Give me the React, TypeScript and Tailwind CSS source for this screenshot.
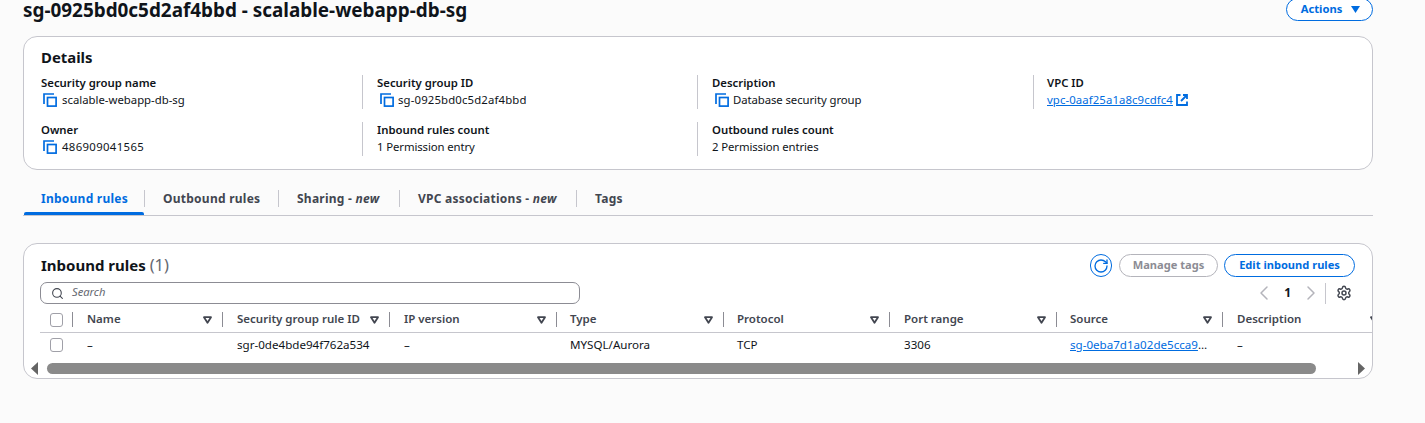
import { Search, RotateCw, ChevronLeft, ChevronRight, Settings } from 'lucide-react'

const FONT = "font-['Noto_Sans',sans-serif]"

const COLUMNS = [
  { name: 'Name', width: 'w-[150px]', pad: 'pl-[14px]', value: '–' },
  { name: 'Security group rule ID', width: 'w-[167px]', pad: 'pl-[14px]', value: 'sgr-0de4bde94f762a534' },
  { name: 'IP version', width: 'w-[167px]', pad: 'pl-[14px]', value: '–' },
  { name: 'Type', width: 'w-[167px]', pad: 'pl-[13px]', value: 'MYSQL/Aurora' },
  { name: 'Protocol', width: 'w-[166px]', pad: 'pl-[13px]', value: 'TCP' },
  { name: 'Port range', width: 'w-[167px]', pad: 'pl-[14px]', value: '3306' },
  { name: 'Source', width: 'w-[166px]', pad: 'pl-[13px]', value: 'sg-0eba7d1a02de5cca9', link: true },
  { name: 'Description', width: 'w-[167px]', pad: 'pl-[14px]', value: '–' },
]

const TABS = [
  { label: 'Inbound rules', active: true, width: 'w-[121px]' },
  { label: 'Outbound rules', width: 'w-[134px]' },
  { label: 'Sharing', isNew: true, width: 'w-[121px]' },
  { label: 'VPC associations', isNew: true, width: 'w-[177px]' },
  { label: 'Tags', width: 'w-[80px]' },
]

function CopyIcon() {
  return (
    <svg width="14" height="14" viewBox="0 0 14 14" fill="none" className="shrink-0">
      <path d="M1 11V1H11" stroke="#006ce0" strokeWidth="1.7" />
      <rect x="4.5" y="4.5" width="8.6" height="8.6" stroke="#006ce0" strokeWidth="1.7" />
    </svg>
  )
}

function ExternalIcon() {
  return (
    <svg width="12" height="12" viewBox="0 0 12 12" fill="none" className="ml-[3px] shrink-0">
      <path d="M4.5 1H1V11H11V7.5" stroke="#006ce0" strokeWidth="1.8" />
      <path d="M7 1H11V5M11 1L5 7" stroke="#006ce0" strokeWidth="1.8" />
    </svg>
  )
}

function SortArrow() {
  return (
    <svg width="9" height="8" viewBox="0 0 9 8" className="shrink-0">
      <path d="M1 1.2H8L4.5 6.8Z" fill="none" stroke="#424650" strokeWidth="1.8" strokeLinejoin="round" />
    </svg>
  )
}

function DetailCell(props: {
  label: string
  value: string
  width?: string
  pad?: string
  tracking?: string
  copy?: boolean
  link?: boolean
  first?: boolean
}) {
  return (
    <div className={props.first ? 'w-[321px] pb-[1px]' : `${props.width} border-l border-[#c6c6cd] ${props.pad ?? 'pl-[14px]'} pb-[1px]`}>
      <div className="h-[16px] text-[11.35px] leading-[16px] font-semibold whitespace-nowrap text-[#0f141a]">{props.label}</div>
      <div className={`flex h-[17px] items-center text-[11.35px] leading-[17px] whitespace-nowrap text-[#0f141a] ${props.tracking ?? ''}`}>
        {props.copy && (
          <span className={props.first ? 'mr-[5px] ml-[2px] flex' : 'mr-[4px] ml-[3px] flex'}>
            <CopyIcon />
          </span>
        )}
        {props.link ? (
          <>
            <span className="text-[#006ce0] underline">{props.value}</span>
            <ExternalIcon />
          </>
        ) : (
          props.value
        )}
      </div>
    </div>
  )
}

export default function App() {
  return (
    <div className={`${FONT} h-[423px] w-[1425px] overflow-hidden bg-[#fbfbfb] pr-[52px] pl-[23px] text-[#0f141a]`}>
      {/* Header */}
      <div className="flex h-[36px] items-start justify-between">
        <h1 className="text-[18.9px] leading-[20px] font-bold whitespace-nowrap">
          sg-0925bd0c5d2af4bbd - scalable-webapp-db-sg
        </h1>
        <button className="mt-[-2px] flex h-[23px] w-[87px] items-center justify-center gap-[9px] rounded-full border border-[#006ce0] bg-white pl-[2px] text-[11.2px] font-bold text-[#006ce0]">
          Actions
          <svg width="9" height="7" viewBox="0 0 9 7">
            <path d="M0 0H9L4.5 7Z" fill="#006ce0" />
          </svg>
        </button>
      </div>

      {/* Details */}
      <div className="h-[134px] rounded-[14px] border border-[#c6c6cd] bg-white pt-[8px] pl-[17px]">
        <h2 className="text-[14.9px] leading-[25px] font-bold">Details</h2>
        <div className="mt-[5px] flex">
          <DetailCell first label="Security group name" value="scalable-webapp-db-sg" copy />
          <DetailCell width="w-[335px]" tracking="tracking-[0.15px]" label="Security group ID" value="sg-0925bd0c5d2af4bbd" copy />
          <DetailCell width="w-[336px]" tracking="tracking-[-0.08px]" label="Description" value="Database security group" copy />
          <DetailCell width="w-[300px]" pad="pl-[13px]" tracking="tracking-[0.1px]" label="VPC ID" value="vpc-0aaf25a1a8c9cdfc4" link />
        </div>
        <div className="mt-[13px] flex">
          <DetailCell first tracking="tracking-[0.35px]" label="Owner" value="486909041565" copy />
          <DetailCell width="w-[335px]" tracking="tracking-[-0.1px]" label="Inbound rules count" value="1 Permission entry" />
          <DetailCell width="w-[336px]" tracking="tracking-[-0.1px]" label="Outbound rules count" value="2 Permission entries" />
        </div>
      </div>

      {/* Tabs */}
      <div className="mt-[15px] flex h-[31px] border-b border-[#c6c6cd]">
        {TABS.map((tab, i) => (
          <div key={tab.label} className={`relative flex h-[27px] ${tab.width} items-center`}>
            <div
              className={`flex h-[17px] w-full items-center pl-[18px] text-[12px] font-bold tracking-[0.25px] whitespace-nowrap ${
                i > 0 ? 'border-l border-[#c6c6cd]' : ''
              } ${tab.active ? 'text-[#006ce0]' : 'text-[#424650]'}`}
            >
              {tab.label}
              {tab.isNew && (
                <span className="whitespace-pre">
                  {' - '}
                  <em>new</em>
                </span>
              )}
            </div>
            {tab.active && <div className="absolute top-[27px] right-0 left-[1px] h-[3px] rounded-t-[2px] bg-[#006ce0]" />}
          </div>
        ))}
      </div>

      {/* Inbound rules */}
      <div className="mt-[27px] h-[136px] overflow-hidden rounded-[14px] border border-[#c6c6cd] bg-white">
        <div className="flex h-[38px] justify-between pr-[17px] pl-[17px]">
          <div className="pt-[8px] text-[15px] leading-[25px] font-bold">
            Inbound rules <span className="text-[16.5px] font-normal text-[#656871]">(1)</span>
          </div>
          <div className="flex items-start pt-[10px]">
            <button className="flex h-[23px] w-[22px] items-center justify-center rounded-full border border-[#006ce0]">
              <RotateCw size={16} strokeWidth={2} color="#006ce0" />
            </button>
            <button className="ml-[7px] h-[23px] w-[99px] rounded-full border border-[#b4b4bb] text-[11.1px] font-bold text-[#8c8c94]">
              Manage tags
            </button>
            <button className="ml-[6px] h-[23px] w-[131px] rounded-full border border-[#006ce0] text-[11.1px] font-bold text-[#006ce0]">
              Edit inbound rules
            </button>
          </div>
        </div>
        <div className="flex h-[22px] items-center justify-between pr-[20px] pl-[16px]">
          <div className="flex h-[22px] w-[540px] items-center rounded-[7px] border border-[#8c8c94] pl-[10px]">
            <Search size={13} strokeWidth={2} color="#424650" />
            <span className="mb-[2px] ml-[8px] text-[11.2px] text-[#656871] italic">Search</span>
          </div>
          <div className="flex items-center">
            <ChevronLeft size={24} strokeWidth={1.5} color="#b4b4bb" />
            <span className="mx-[8px] text-[12px] font-bold">1</span>
            <ChevronRight size={24} strokeWidth={1.5} color="#b4b4bb" />
            <div className="mr-[10px] ml-[2px] h-[21px] border-l border-[#c6c6cd]" />
            <Settings size={16} strokeWidth={2.2} color="#424650" />
          </div>
        </div>

        {/* Table */}
        <div className="ml-[16px] w-[1332px] overflow-hidden">
          <div className="flex h-[29px] w-[1400px] items-center border-b border-[#c6c6cd] pt-[3px]">
            <div className="flex w-[32px] shrink-0 items-center pl-[10px]">
              <div className="h-[14px] w-[13px] rounded-[3px] border border-[#a0a0a8]" />
            </div>
            {COLUMNS.map((col) => (
              <div key={col.name} className={`flex h-[15px] shrink-0 ${col.width} items-center justify-between border-l border-[#8c8c94] pr-[10px] ${col.pad} text-[11.5px] font-semibold whitespace-nowrap text-[#424650]`}>
                <span className="mb-[2px]">{col.name}</span>
                <SortArrow />
              </div>
            ))}
          </div>
          <div className="flex h-[23px] w-[1400px] items-center text-[11.6px] text-[#0f141a]">
            <div className="flex w-[32px] shrink-0 items-center pl-[10px]">
              <div className="h-[14px] w-[13px] rounded-[3px] border border-[#a0a0a8]" />
            </div>
            {COLUMNS.map((col) => (
              <div key={col.name} className={`shrink-0 ${col.width} border-l border-transparent ${col.pad} whitespace-nowrap`}>
                {col.link ? (
                  <>
                    <span className="text-[#006ce0] underline">{col.value}</span>…
                  </>
                ) : (
                  col.value
                )}
              </div>
            ))}
          </div>
        </div>

        {/* Scrollbar */}
        <div className="flex h-[22px] items-center pt-[3px] pr-[7px] pl-[7px]">
          <svg width="7" height="13" viewBox="0 0 7 13">
            <path d="M7 0V13L0 6.5Z" fill="#656565" />
          </svg>
          <div className="ml-[9px] h-[11px] w-[1269px] rounded-full bg-[#8a8a8a]" />
          <div className="flex-1" />
          <svg width="7" height="13" viewBox="0 0 7 13">
            <path d="M0 0V13L7 6.5Z" fill="#656565" />
          </svg>
        </div>
      </div>
    </div>
  )
}
